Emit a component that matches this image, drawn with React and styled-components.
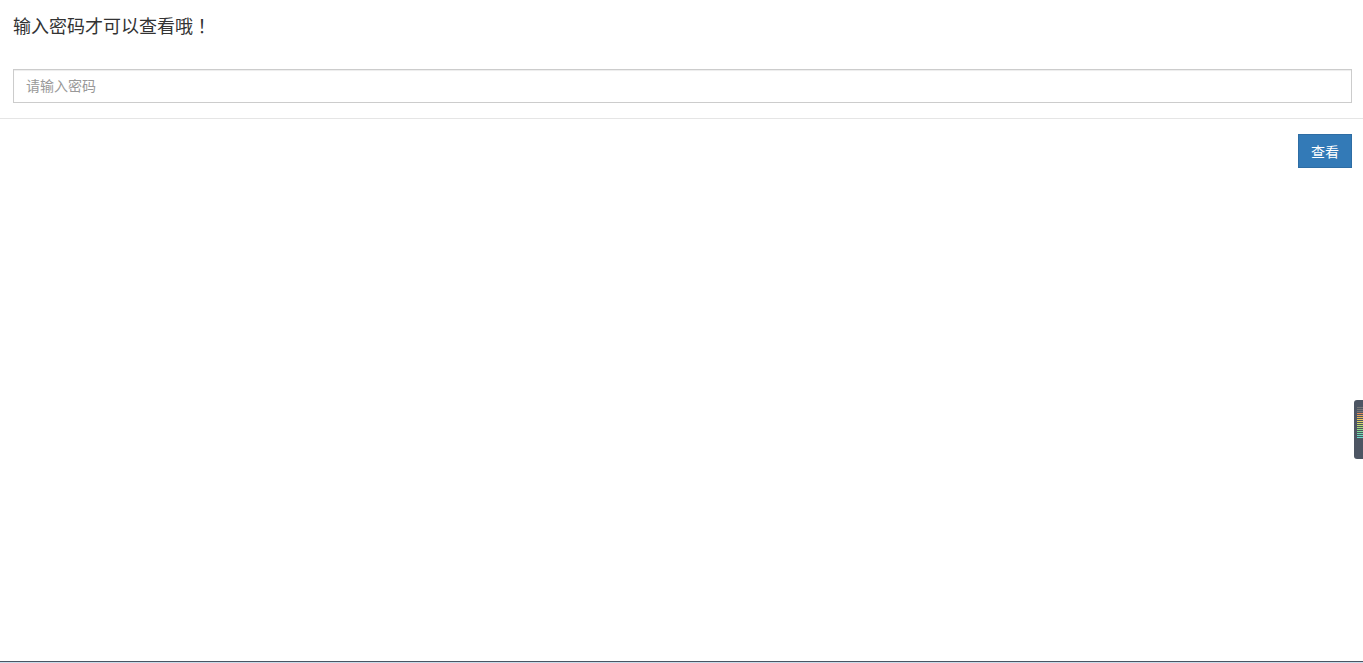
import React from "react";
import styled, { createGlobalStyle } from "styled-components";

const Global = createGlobalStyle`
  html, body { margin: 0; padding: 0; background: #fff; }
  body {
    font-family: "Helvetica Neue", Helvetica, Arial, "Noto Sans CJK SC", sans-serif;
    font-size: 14px;
    color: #333;
    min-height: 663px;
  }
  * { box-sizing: border-box; }
`;

const Page = styled.div`
  display: flex;
  flex-direction: column;
  min-height: 663px;
`;

const Body = styled.div`
  padding: 13px 11px 15px 13px;
  display: flex;
  flex-direction: column;
`;

const Title = styled.h4`
  margin: 0;
  font-family: "Noto Sans CJK SC", sans-serif;
  font-size: 18px;
  font-weight: 400;
  line-height: 25px;
  color: #333;
`;

const Punct = styled.span`
  font-family: "Noto Sans CJK TC", sans-serif;
`;

const Input = styled.input`
  margin-top: 31px;
  height: 34px;
  width: 100%;
  padding: 6px 12px;
  border: 1px solid #ccc;
  border-radius: 0;
  box-shadow: inset 0 1px 1px rgba(0, 0, 0, 0.075);
  font-family: "Liberation Sans", "Noto Sans CJK SC", sans-serif;
  font-size: 14px;
  color: #555;
  outline: none;
  &::placeholder { color: #999; }
`;

const Footer = styled.div`
  border-top: 1px solid #e5e5e5;
  padding: 15px 11px 15px 15px;
  display: flex;
  justify-content: flex-end;
`;

const Button = styled.button`
  height: 34px;
  width: 54px;
  padding: 0;
  border: 1px solid #2e6da4;
  border-radius: 0;
  background: #337ab7;
  color: #fff;
  font-family: "Liberation Sans", "Noto Sans CJK SC", sans-serif;
  font-size: 14px;
  cursor: pointer;
`;

const Spacer = styled.div`
  flex: 1;
`;

const TaskStrip = styled.div`
  height: 2px;
  border-top: 1px solid #4a5563;
  background: #c9dbe9;
`;

const SideTab = styled.div`
  position: fixed;
  right: 0;
  top: 400px;
  width: 9px;
  height: 59px;
  background: #4d5563;
  border-radius: 3px 0 0 3px;
  padding: 7px 0 0 3px;
  display: flex;
  flex-direction: column;
  gap: 1px;
`;

const Bar = styled.div`
  height: 1px;
  width: 6px;
  background: ${(p) => p.$c};
`;

const barColors = [
  "#777", "#777", "#777", "#e08a5a", "#e6a45a", "#e8b85a", "#e8c85c",
  "#dfd060", "#cfd868", "#bddc70", "#a8dc78", "#92dc86", "#80dc96",
  "#72dcaa", "#6adcbc", "#66dcc8"
];

export default function App() {
  return (
    <>
      <Global />
      <Page>
        <Body>
          <Title>
            输入密码才可以查看哦<Punct>！</Punct>
          </Title>
          <Input type="password" placeholder="请输入密码" />
        </Body>
        <Footer>
          <Button>查看</Button>
        </Footer>
        <Spacer />
        <TaskStrip />
      </Page>
      <SideTab>
        {barColors.map((c, i) => (
          <Bar key={i} $c={c} />
        ))}
      </SideTab>
    </>
  );
}
